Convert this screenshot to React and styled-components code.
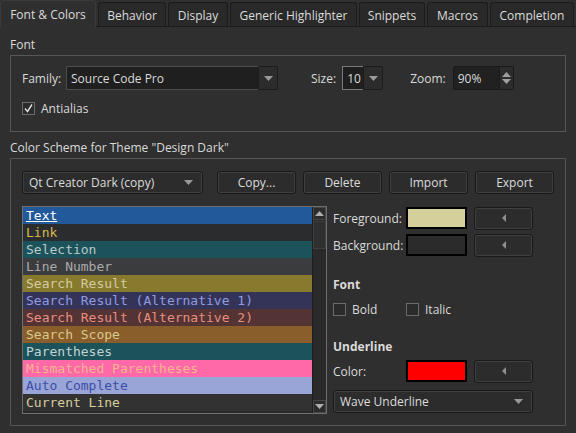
import React from "react";
import styled, { createGlobalStyle } from "styled-components";

const GlobalStyle = createGlobalStyle`
  html, body {
    margin: 0;
    background: #2f2f2f;
  }
  body {
    font-family: "Open Sans", "Noto Sans", sans-serif;
    font-size: 12px;
    color: #dadada;
  }
`;

const Window = styled.div`
  width: 576px;
  height: 433px;
  overflow: hidden;
  background: #2f2f2f;
  display: flex;
  flex-direction: column;
`;

const TabBar = styled.div`
  display: flex;
  align-items: flex-end;
  gap: 2px;
  height: 27px;
  box-sizing: border-box;
  border-bottom: 1px solid #1d1d1d;
`;

const Tab = styled.div`
  width: ${p => p.$w}px;
  height: ${p => (p.$active ? 27 : 24)}px;
  margin-bottom: ${p => (p.$active ? -1 : 0)}px;
  box-sizing: border-box;
  display: flex;
  align-items: center;
  justify-content: center;
  padding-top: ${p => (p.$active ? 0 : 1)}px;
  background: ${p => (p.$active ? "#2f2f2f" : "#292929")};
  border: 1px solid ${p => (p.$active ? "#3a3a3a" : "#1b1b1b")};
  border-bottom: none;
  border-radius: 3px 3px 0 0;
  color: #dcdcdc;
  white-space: nowrap;
`;

const Pane = styled.div`
  padding: 10px 10px 0 10px;
  display: flex;
  flex-direction: column;
`;

const GroupTitle = styled.div`
  line-height: 16px;
  height: 16px;
  margin-top: ${p => p.$top || 0}px;
  margin-bottom: 2px;
`;

const GroupBox = styled.div`
  height: ${p => p.$h}px;
  box-sizing: border-box;
  border: 1px solid #575757;
  padding: ${p => p.$pt}px 11px 0 11px;
  display: flex;
  flex-direction: column;
`;

const Row = styled.div`
  display: flex;
  align-items: center;
  height: ${p => p.$h || 22}px;
  margin-top: ${p => p.$top || 0}px;
  gap: ${p => p.$gap || 0}px;
`;

const Label = styled.span`
  width: ${p => (p.$w ? `${p.$w}px` : "auto")};
  margin-left: ${p => p.$ml || 0}px;
  flex-shrink: 0;
  white-space: nowrap;
`;

const ComboField = styled.div`
  width: ${p => p.$w}px;
  height: 24px;
  margin-left: ${p => p.$ml || 0}px;
  display: flex;
  box-sizing: border-box;
`;

const ComboText = styled.div`
  flex: 1;
  background: #1f1f1f;
  border: 1px solid ${p => (p.$focus ? "#7a7a7a" : "#4c4c4c")};
  border-right: none;
  padding-left: 4px;
  display: flex;
  align-items: center;
  box-sizing: border-box;
`;

const ComboArrow = styled.div`
  width: 20px;
  background: #2c2c2c;
  border: 1px solid #1c1c1c;
  border-radius: 0 2px 2px 0;
  display: flex;
  align-items: center;
  justify-content: center;
  box-sizing: border-box;
`;

const SpinBox = styled.div`
  width: 61px;
  height: 24px;
  margin-left: 7px;
  background: #212121;
  border: 1px solid #1a1a1a;
  border-radius: 2px;
  box-sizing: border-box;
  display: flex;
`;

const SpinText = styled.div`
  flex: 1;
  padding-left: 4px;
  display: flex;
  align-items: center;
`;

const SpinArrows = styled.div`
  width: 13px;
  background: #2c2c2c;
  border-left: 1px solid #1a1a1a;
  display: flex;
  flex-direction: column;
  align-items: center;
  justify-content: center;
  gap: 2px;
`;

const Check = styled.span`
  width: 13px;
  height: 13px;
  box-sizing: border-box;
  border: 1px solid #6b6b6b;
  background: #2b2b2b;
  flex-shrink: 0;
  display: flex;
  align-items: center;
  justify-content: center;
  margin-left: ${p => p.$ml || 0}px;
`;

const CheckLabel = styled.span`
  margin-left: 6px;
  width: ${p => (p.$w ? `${p.$w}px` : "auto")};
`;

const PushButton = styled.div`
  width: ${p => p.$w}px;
  height: 23px;
  box-sizing: border-box;
  background: #2c2c2c;
  border: 1px solid #191919;
  box-shadow: inset 0 0 0 1px #404040;
  border-radius: 3px;
  display: flex;
  align-items: center;
  justify-content: ${p => (p.$left ? "space-between" : "center")};
  padding: 0 ${p => (p.$left ? 9 : 0)}px 0 ${p => (p.$left ? 6 : 0)}px;
  margin-left: ${p => p.$ml || 0}px;
  color: #dcdcdc;
`;

const ButtonRow = styled.div`
  display: flex;
  align-items: center;
  gap: 7px;
  height: 23px;
`;

const Main = styled.div`
  display: grid;
  grid-template-columns: 305px 200px;
  column-gap: 6px;
  margin-top: 12px;
`;

const List = styled.div`
  height: 208px;
  box-sizing: border-box;
  border: 1px solid #707070;
  display: flex;
  background: #2a2a2a;
`;

const Items = styled.div`
  flex: 1;
  display: flex;
  flex-direction: column;
`;

const Item = styled.div`
  height: 17px;
  line-height: 17px;
  padding-left: 3px;
  background: ${p => p.$bg};
  color: ${p => p.$fg};
  font-family: "DejaVu Sans Mono", "Liberation Mono", monospace;
  font-size: 13px;
  text-decoration: ${p => (p.$underline ? "underline" : "none")};
  white-space: nowrap;
  overflow: hidden;
`;

const ScrollBar = styled.div`
  width: 13px;
  background: #2a2a2a;
  border-left: 1px solid #1e1e1e;
  display: flex;
  flex-direction: column;
`;

const ScrollBtn = styled.div`
  height: 13px;
  box-sizing: border-box;
  border: 1px solid #474747;
  background: #2c2c2c;
  display: flex;
  align-items: center;
  justify-content: center;
`;

const ScrollHandle = styled.div`
  height: 28px;
  margin-top: 1px;
  box-sizing: border-box;
  border: 1px solid #3e3e3e;
  background: #2f2f2f;
`;

const ScrollTrack = styled.div`
  flex: 1;
`;

const Side = styled.div`
  display: flex;
  flex-direction: column;
`;

const Swatch = styled.div`
  width: 61px;
  height: 22px;
  box-sizing: border-box;
  border: 2px solid #000;
  background: ${p => p.$c};
`;

const Heading = styled.div`
  font-weight: bold;
  line-height: 16px;
  height: 16px;
  margin-top: ${p => p.$top}px;
`;

const DownTri = ({ c = "#9a9a9a" }) => (
  <svg width="9" height="5" viewBox="0 0 9 5">
    <path d="M0 0 H9 L4.5 5 Z" fill={c} />
  </svg>
);

const UpTri = ({ c = "#9a9a9a" }) => (
  <svg width="9" height="5" viewBox="0 0 9 5">
    <path d="M0 5 H9 L4.5 0 Z" fill={c} />
  </svg>
);

const LeftTri = () => (
  <svg width="4" height="8" viewBox="0 0 4 8">
    <path d="M4 0 V8 L0 4 Z" fill="#8e8e8e" />
  </svg>
);

const CheckMark = () => (
  <svg width="11" height="11" viewBox="0 0 11 11">
    <path d="M2 5.5 L4.5 8.5 L9 1.5" stroke="#e0e0e0" strokeWidth="1.4" fill="none" />
  </svg>
);

const tabs = [
  { label: "Font & Colors", w: 96, active: true },
  { label: "Behavior", w: 68 },
  { label: "Display", w: 60 },
  { label: "Generic Highlighter", w: 127 },
  { label: "Snippets", w: 66 },
  { label: "Macros", w: 61 },
  { label: "Completion", w: 84 },
];

const items = [
  { t: "Text", bg: "#21599a", fg: "#ffffff", u: true },
  { t: "Link", bg: "#2b2c2e", fg: "#d6b94e" },
  { t: "Selection", bg: "#1c535b", fg: "#b8c8c8" },
  { t: "Line Number", bg: "#3b3c3e", fg: "#ababab" },
  { t: "Search Result", bg: "#877a2c", fg: "#d4cba2" },
  { t: "Search Result (Alternative 1)", bg: "#343458", fg: "#8f9be3" },
  { t: "Search Result (Alternative 2)", bg: "#543334", fg: "#e88e80" },
  { t: "Search Scope", bg: "#8a5e2b", fg: "#d9c98c" },
  { t: "Parentheses", bg: "#1c535b", fg: "#c2d2d2" },
  { t: "Mismatched Parentheses", bg: "#ff69a7", fg: "#f5b590" },
  { t: "Auto Complete", bg: "#99a5d7", fg: "#3c4ea6" },
  { t: "Current Line", bg: "#323232", fg: "#d6cf9c" },
];

export default function App() {
  return (
    <Window>
      <GlobalStyle />
      <TabBar>
        {tabs.map(t => (
          <Tab key={t.label} $w={t.w} $active={t.active}>
            {t.label}
          </Tab>
        ))}
      </TabBar>

      <Pane>
        <GroupTitle>Font</GroupTitle>
        <GroupBox $h={77} $pt={10}>
          <Row $h={24}>
            <Label $w={44}>Family:</Label>
            <ComboField $w={212}>
              <ComboText>Source Code Pro</ComboText>
              <ComboArrow><DownTri /></ComboArrow>
            </ComboField>
            <Label $ml={33}>Size:</Label>
            <ComboField $w={41} $ml={6}>
              <ComboText $focus>10</ComboText>
              <ComboArrow><DownTri /></ComboArrow>
            </ComboField>
            <Label $ml={27}>Zoom:</Label>
            <SpinBox>
              <SpinText>90%</SpinText>
              <SpinArrows>
                <UpTri c="#a0a0a0" />
                <DownTri c="#a0a0a0" />
              </SpinArrows>
            </SpinBox>
          </Row>
          <Row $h={20} $top={8}>
            <Check><CheckMark /></Check>
            <CheckLabel>Antialias</CheckLabel>
          </Row>
        </GroupBox>

        <GroupTitle $top={8}>Color Scheme for Theme "Design Dark"</GroupTitle>
        <GroupBox $h={268} $pt={12}>
          <ButtonRow>
            <PushButton $w={181} $left>
              <span>Qt Creator Dark (copy)</span>
              <DownTri />
            </PushButton>
            <PushButton $w={79} $ml={7}>Copy...</PushButton>
            <PushButton $w={79}>Delete</PushButton>
            <PushButton $w={79}>Import</PushButton>
            <PushButton $w={79}>Export</PushButton>
          </ButtonRow>

          <Main>
            <List>
              <Items>
                {items.map(i => (
                  <Item key={i.t} $bg={i.bg} $fg={i.fg} $underline={i.u}>
                    {i.t}
                  </Item>
                ))}
              </Items>
              <ScrollBar>
                <ScrollBtn><UpTri c="#b0b0b0" /></ScrollBtn>
                <ScrollHandle />
                <ScrollTrack />
                <ScrollBtn><DownTri c="#b0b0b0" /></ScrollBtn>
              </ScrollBar>
            </List>

            <Side>
              <Row $top={1}>
                <Label $w={73}>Foreground:</Label>
                <Swatch $c="#d4cf9b" />
                <PushButton $w={59} $ml={7}><LeftTri /></PushButton>
              </Row>
              <Row $top={5}>
                <Label $w={73}>Background:</Label>
                <Swatch $c="#2b2b2b" />
                <PushButton $w={59} $ml={7}><LeftTri /></PushButton>
              </Row>
              <Heading $top={21}>Font</Heading>
              <Row $h={17} $top={8}>
                <Check />
                <CheckLabel $w={54}>Bold</CheckLabel>
                <Check />
                <CheckLabel>Italic</CheckLabel>
              </Row>
              <Heading $top={21}>Underline</Heading>
              <Row $top={5}>
                <Label $w={73}>Color:</Label>
                <Swatch $c="#ff0000" />
                <PushButton $w={59} $ml={7}><LeftTri /></PushButton>
              </Row>
              <Row $top={8}>
                <PushButton $w={200} $left>
                  <span>Wave Underline</span>
                  <DownTri />
                </PushButton>
              </Row>
            </Side>
          </Main>
        </GroupBox>
      </Pane>
    </Window>
  );
}
